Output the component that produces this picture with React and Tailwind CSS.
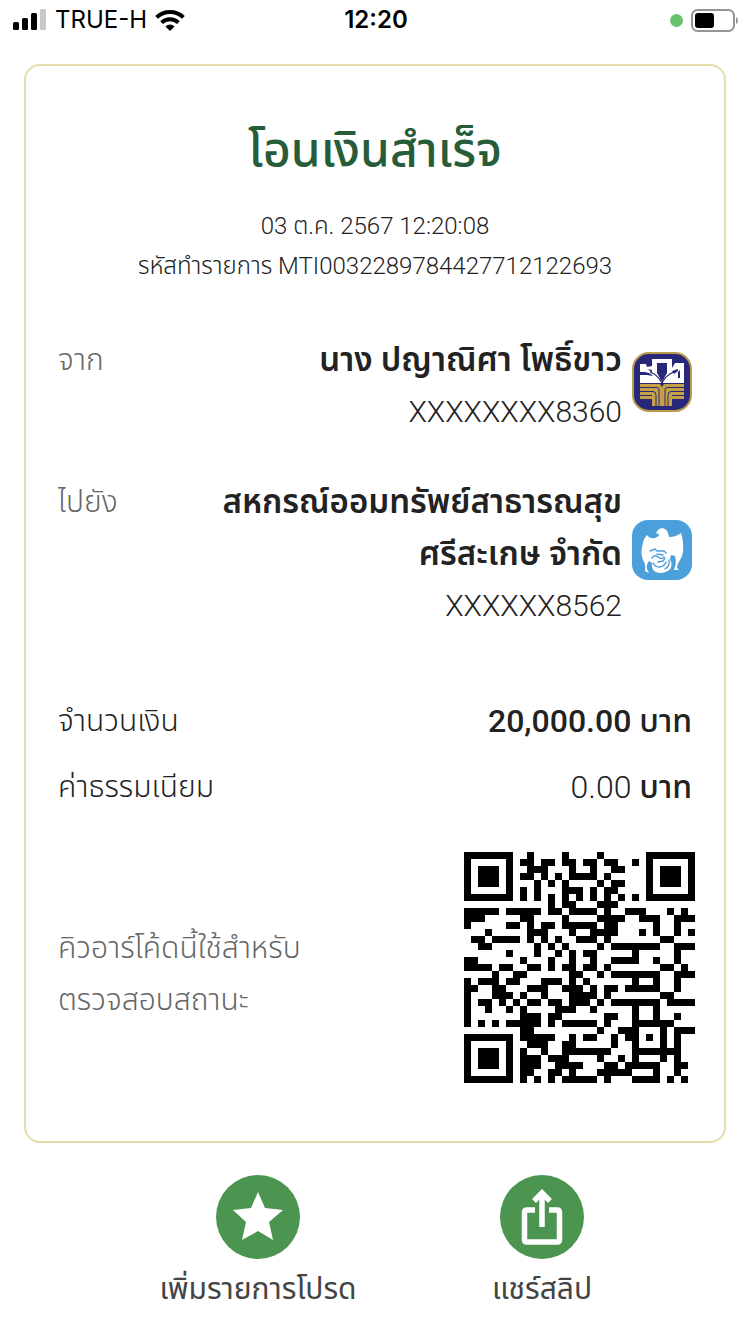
const qrRows = [
  "111111100100001000010000001111111",
  "100000101101101101101100101000001",
  "101110100111000100100110001011101",
  "101110101101010111101000001011101",
  "101110100010101000010110001011101",
  "100000101010001110101100001000001",
  "111111101010101010101010101111111",
  "000000000000101100011100000000000",
  "111110111110110111101001110001010",
  "111000001100001000011110011100111",
  "100000110101101111101100000100100",
  "000100000111000100111100010100101",
  "011011110101010011101000000011000",
  "001100000010101000010111111100111",
  "000000100010010101100000100000100",
  "110000001000100100100111100100100",
  "111101100110101101101000000011010",
  "000010011000000110010111111100111",
  "101110110001110101000000100100100",
  "110011000111001110101101111100100",
  "100011101001000111101000000011000",
  "101101010110110111010111111101111",
  "100100101000011100100000100100000",
  "100000001110110000001100100100100",
  "101010111110101111101000111111000",
  "000000001100000000010011100010111",
  "111111101111100101100101101010100",
  "100000100111001100000100100010100",
  "101110101001001111111000111111100",
  "101110101110111000010010100010100",
  "101110101110011110001101111100110",
  "100000101100110100011111000100100",
  "111111101010101111101000111101010",
];

function QrCode() {
  return (
    <svg viewBox="0 0 33 33" className="size-[231px] shrink-0 -mr-[3px]" shapeRendering="crispEdges" role="img" aria-label="QR">
      <path
        d={qrRows
          .map((row, y) => [...row].map((m, x) => (m === "1" ? `M${x} ${y}h1v1h-1z` : "")).join(""))
          .join("")}
      />
    </svg>
  );
}

function SignalIcon() {
  return (
    <svg viewBox="0 0 34 22" className="h-[22px] w-[34px]">
      <rect x="0" y="13" width="6" height="8" rx="1.5" />
      <rect x="9" y="9" width="6" height="12" rx="1.5" />
      <rect x="18" y="4" width="6" height="17" rx="1.5" />
      <rect x="27" y="0" width="6" height="21" rx="1.5" fill="#c8c8c8" />
    </svg>
  );
}

function WifiIcon() {
  return (
    <svg viewBox="0 0 30 22" className="h-[22px] w-[30px]" fill="none" stroke="#000" strokeWidth="4">
      <path d="M1.6 8.4a19.4 19.4 0 0 1 26.800 0" />
      <path d="M6.6 13.6a12.2 12.2 0 0 1 16.800 0" />
      <path d="M15 22l-4.6-4.6a6.6 6.6 0 0 1 9.200 0z" fill="#000" stroke="none" />
    </svg>
  );
}

function BatteryIcon() {
  return (
    <svg viewBox="0 0 48 23" className="h-[23px] w-[48px]">
      <rect x="1" y="1" width="42" height="21" rx="5.5" fill="none" stroke="#959595" strokeWidth="2" />
      <rect x="4" y="4" width="19" height="15" rx="3" />
      <path d="M45 8q2 1 2 3.500t-2 3.500z" fill="#959595" />
    </svg>
  );
}

function BaacLogo() {
  return (
    <svg viewBox="0 0 60 60" className="mb-2 size-[60px] shrink-0">
      <rect x="1" y="1" width="58" height="58" rx="16" fill="#28287a" stroke="#bd9b4e" strokeWidth="2" />
      <path fill="#fff" d="M8 12h6l1 3 5-1V7h20v9l3-5h9v20H8z" />
      <g fill="#28287a">
        <path d="M25 11h10v10l-5 9-5-9z" />
        <path d="M8 20h5q6 1 8 4l-6-1H8z" />
        <path d="M16 17l4 1v3zM40 19l6-2v2l-4 3z" />
        <path d="M48 18v8h-2v-6z" />
      </g>
      <path fill="none" stroke="#28287a" strokeWidth="1.200" d="M30 31Q25 22 18 20M30 31q4-8 12-11" />
      <path fill="#c5a045" d="M8 32h20l2 3 2-3h20v15H40v7H20v-7H8z" />
      <g fill="none" stroke="#28287a" strokeWidth="1">
        <path d="M8 35.500h17q2 0 2 3V54M52 35.500H35q-2 0-2 3V54" />
        <path d="M8 39.500h13q3 0 3 4V54M52 39.500H39q-3 0-3 4V54" />
        <path d="M8 43.500h12M52 43.500H40" />
      </g>
    </svg>
  );
}

function KrungthaiLogo() {
  return (
    <svg viewBox="0 0 60 60" className="mb-2 size-[60px] shrink-0">
      <rect width="60" height="60" rx="16" fill="#4b9fdb" />
      <path
        fill="#fff"
        d="M24 14q1-5 6-6 5 1 6 5l1 4q7 0 12-4 3 9 2 19-1 5-3 8-3 5-3 8l2 2h-5q3-8 1-14l-4-1-1 4q4 8-2 12-8 4-14 0-3-4-2-8l-3-2q-3 4-2 8l2 4-4-2q1-7-2-11-3-8 0-17 1-5 4-8 3 4 8 3l4-2-1-3-2 1z"
      />
      <g fill="none" stroke="#4b9fdb" strokeWidth="1.400" strokeLinecap="round">
        <path d="M18 31l5-2 2 2h7l2 2M25 34l6 1M20 38q3-4 6-1t6 0" />
        <path d="M21 43q2 4 6 4 5 0 7-5M26 42l5-1 2-3M37 40q1 6-4 9" />
      </g>
    </svg>
  );
}

function StarIcon() {
  return (
    <svg viewBox="0 0 84 84" className="size-[84px]">
      <circle cx="42" cy="42" r="42" fill="#4c9551" />
      <path fill="#fff" d="M42 17l7 16 18 2-14 12 4 18-15-9-16 9 4-18-13-12 18-2z" />
    </svg>
  );
}

function ShareIcon() {
  return (
    <svg viewBox="0 0 84 84" className="size-[84px]">
      <circle cx="42" cy="42" r="42" fill="#4c9551" />
      <path
        d="M35 35h-8q-2.500 0-2.500 2.500v27q0 2.500 2.500 2.500h30q2.500 0 2.500-2.500v-27q0-2.500-2.500-2.500h-8M42 52V19M34 26l8-8 8 8"
        fill="none"
        stroke="#fff"
        strokeWidth="5.500"
      />
    </svg>
  );
}

export default function App() {
  return (
    <div className="min-h-screen bg-white font-['Roboto','Noto_Sans_Thai',sans-serif] font-light text-[#222]">
      <header className="grid h-10 grid-cols-3 items-center pl-[13px] pr-[11px] font-['Inter',sans-serif] text-2xl font-normal text-black">
        <div className="flex items-center gap-2">
          <SignalIcon />
          <span>TRUE-H</span>
          <WifiIcon />
        </div>
        <div className="text-center font-semibold">12:20</div>
        <div className="flex items-center justify-end gap-2">
          <span className="size-[13px] rounded-full bg-[#67c46b]" />
          <BatteryIcon />
        </div>
      </header>

      <main className="mx-6 mt-6 rounded-2xl border-2 border-[#e6dcae] px-8 pb-[58px] pt-11">
        <h1 className="text-center text-5xl font-medium leading-[80px] text-[#275c38]">โอนเงินสำเร็จ</h1>
        <div className="mt-4 text-center text-2xl leading-10">
          <p>03 ต.ค. 2567 12:20:08</p>
          <p>รหัสทำรายการ MTI0032289784427712122693</p>
        </div>

        <section className="mt-12 flex items-center justify-between text-[30px] leading-[52px]">
          <h2 className="self-start text-[#666]">จาก</h2>
          <div className="flex items-center gap-[10px] text-right">
            <div>
              <p className="text-[33px] font-semibold">นาง ปญาณิศา โพธิ์ขาว</p>
              <p>XXXXXXXX8360</p>
            </div>
            <BaacLogo />
          </div>
        </section>

        <section className="mt-[38px] flex items-center justify-between text-[30px] leading-[52px]">
          <h2 className="self-start text-[#666]">ไปยัง</h2>
          <div className="flex items-center gap-[10px] text-right">
            <div>
              <p className="text-[33px] font-semibold">
                สหกรณ์ออมทรัพย์สาธารณสุข
                <br />
                ศรีสะเกษ จำกัด
              </p>
              <p>XXXXXX8562</p>
            </div>
            <KrungthaiLogo />
          </div>
        </section>

        <dl className="mt-14 text-[32px] leading-[66px]">
          <div className="flex justify-between">
            <dt className="text-[30px]">จำนวนเงิน</dt>
            <dd className="font-medium">20,000.00 บาท</dd>
          </div>
          <div className="flex justify-between">
            <dt className="text-[30px]">ค่าธรรมเนียม</dt>
            <dd>
              0.00 <span className="font-medium">บาท</span>
            </dd>
          </div>
        </dl>

        <section className="mt-8 flex items-center justify-between">
          <p className="pt-3 text-[30px] leading-[52px] text-[#666]">
            คิวอาร์โค้ดนี้ใช้สำหรับ
            <br />
            ตรวจสอบสถานะ
          </p>
          <QrCode />
        </section>
      </main>

      <footer className="mt-8 flex justify-center gap-[134px] text-[30px] font-normal leading-[60px] text-[#444]">
        <button className="flex w-[200px] flex-col items-center whitespace-nowrap">
          <StarIcon />
          เพิ่มรายการโปรด
        </button>
        <button className="flex w-[100px] flex-col items-center whitespace-nowrap">
          <ShareIcon />
          แชร์สลิป
        </button>
      </footer>
    </div>
  );
}
